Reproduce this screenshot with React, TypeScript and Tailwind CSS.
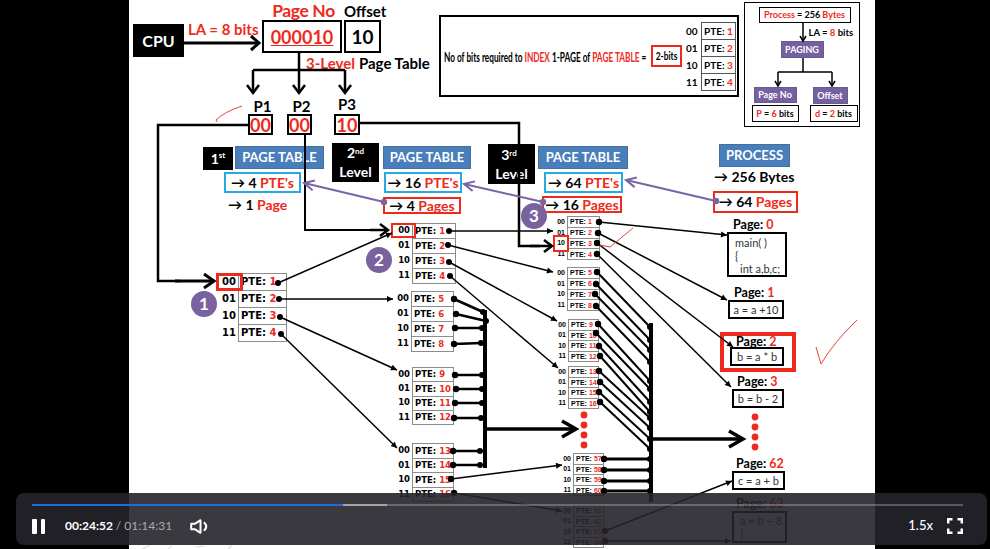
import type { ReactNode } from 'react';

// the slide is a free canvas: groups are placed in page pixels, their insides flow
function Place({ x, y, className = '', children }: { x: number; y: number; className?: string; children: ReactNode }) {
  return (
    <div className={`absolute whitespace-nowrap leading-none ${className}`} style={{ left: x, top: y }}>
      {children}
    </div>
  );
}

const R = ({ children }: { children: ReactNode }) => <span className="text-[#ee2a1c]">{children}</span>;

const BITS = ['00', '01', '10', '11'];

function PteTable({ x, y, label, cell, row, start, font }: { x: number; y: number; label: number; cell: number; row: number; start: number; font: string }) {
  return (
    <div className={`absolute font-bold leading-none text-black ${font}`} style={{ left: x, top: y }}>
      {BITS.map((b, i) => (
        <div key={b} className="flex items-stretch" style={{ height: row }}>
          <div className="flex items-center justify-end pr-[2px]" style={{ width: label }}>{b}</div>
          <div className="-mb-px flex items-center whitespace-nowrap border border-[#8c8c8c] bg-white pl-[2px]" style={{ width: cell }}>
            PTE:&nbsp;<R>{start + i}</R>
          </div>
        </div>
      ))}
    </div>
  );
}

type P = [number, number];

function Arrow({ a, b, w = 2, h = 6, hw = 4, color = '#000', open = false, dot = false }: { a: P; b: P; w?: number; h?: number; hw?: number; color?: string; open?: boolean; dot?: boolean }) {
  const len = Math.hypot(b[0] - a[0], b[1] - a[1]);
  const ux = (b[0] - a[0]) / len;
  const uy = (b[1] - a[1]) / len;
  const l: P = [b[0] - h * ux - hw * uy, b[1] - h * uy + hw * ux];
  const r: P = [b[0] - h * ux + hw * uy, b[1] - h * uy - hw * ux];
  return (
    <g>
      <line x1={a[0]} y1={a[1]} x2={b[0]} y2={b[1]} stroke={color} strokeWidth={w} />
      {open ? (
        <polyline points={`${l[0]},${l[1]} ${b[0]},${b[1]} ${r[0]},${r[1]}`} fill="none" stroke={color} strokeWidth={w} />
      ) : (
        <polygon points={`${l[0]},${l[1]} ${b[0]},${b[1]} ${r[0]},${r[1]}`} fill={color} />
      )}
      {dot && <circle cx={a[0]} cy={a[1]} r={3.2} fill={color} />}
    </g>
  );
}

function Link({ a, b, w = 2 }: { a: P; b: P; w?: number }) {
  return (
    <g>
      <line x1={a[0]} y1={a[1]} x2={b[0]} y2={b[1]} stroke="#000" strokeWidth={w} />
      <circle cx={a[0]} cy={a[1]} r={3.2} fill="#000" />
      <circle cx={b[0]} cy={b[1]} r={3} fill="#000" />
    </g>
  );
}

const Dot = ({ p, r = 3 }: { p: P; r?: number }) => <circle cx={p[0]} cy={p[1]} r={r} fill="#000" />;

const BAR_Y = [327, 340, 350, 362, 381, 389, 402, 412, 418, 428, 439, 449];
const L3_DOTS: P[] = [
  [597, 272], [596, 284], [595, 294], [596, 306],
  [598, 324], [596, 333], [599, 346], [600, 356],
  [599, 371], [600, 382], [599, 392], [600, 402],
];

const L2_LINKS: [P, P][] = [
  [[454, 299], [483, 312]],
  [[456, 314], [486, 321]],
  [[455, 328], [482, 328]],
  [[454, 344], [481, 343]],
  [[455, 375], [482, 375]],
  [[456, 389], [482, 389]],
  [[455, 403], [482, 403]],
  [[454, 418], [481, 418]],
  [[453, 451], [480, 451]],
  [[453, 465], [480, 465]],
];

function Diagram() {
  return (
    <svg className="absolute left-0 top-0" width={990} height={549} viewBox="0 0 990 549" fill="none">
      {/* CPU + address split */}
      <Arrow a={[184, 43]} b={[259, 43]} w={3} h={8} hw={7} open />
      <line x1={299} y1={53} x2={299} y2={70} stroke="#000" strokeWidth={2.5} />
      <line x1={253} y1={70} x2={345} y2={70} stroke="#000" strokeWidth={2.5} />
      <Arrow a={[253, 70]} b={[253, 93]} w={2.5} h={8} hw={6} open />
      <Arrow a={[299, 70]} b={[299, 93]} w={2.5} h={8} hw={6} open />
      <Arrow a={[345, 70]} b={[345, 93]} w={2.5} h={8} hw={6} open />

      {/* level routes */}
      <polyline points="248,125 158,125 158,281 180,281" stroke="#000" strokeWidth={2.5} />
      <Arrow a={[175, 281]} b={[214, 281]} w={3} h={10} hw={7} open />
      <polyline points="305,133 305,230 380,230" stroke="#000" strokeWidth={2} />
      <Arrow a={[370, 230]} b={[388, 230]} w={2.5} h={8} hw={6} open />
      <polyline points="360,123 519,123 519,246 540,246" stroke="#000" strokeWidth={2.5} />
      <Arrow a={[530, 246]} b={[552, 246]} w={2.5} h={8} hw={6} open />

      {/* purple links */}
      <Arrow a={[716, 201]} b={[626, 180]} w={2} h={10} hw={5} color="#7b64a4" open dot />
      <Arrow a={[543, 202]} b={[464, 184]} w={2} h={10} hw={5} color="#7b64a4" open dot />
      <Arrow a={[384, 202]} b={[304, 183]} w={2} h={10} hw={5} color="#7b64a4" open dot />

      {/* level 1 to level 2 */}
      <Arrow a={[278, 283]} b={[392, 233]} w={1.5} h={6} hw={3} />
      <Arrow a={[279, 299]} b={[393, 299]} w={1.5} h={6} hw={3} />
      <Arrow a={[280, 317]} b={[397, 370]} w={1.5} h={6} hw={3} />
      <Arrow a={[281, 334]} b={[397, 448]} w={1.5} h={6} hw={3} />
      <Dot p={[278, 283]} />
      <Dot p={[279, 299]} />
      <Dot p={[280, 317]} />
      <Dot p={[281, 334]} />

      {/* level 2 to level 3 */}
      <Arrow a={[449, 231]} b={[553, 231]} w={1.5} h={6} hw={3} />
      <Arrow a={[448, 245]} b={[553, 272]} w={1.5} h={6} hw={3} />
      <Arrow a={[449, 262]} b={[557, 321]} w={1.5} h={6} hw={3} />
      <Arrow a={[450, 276]} b={[558, 368]} w={1.5} h={6} hw={3} />
      <Dot p={[449, 231]} />
      <Dot p={[448, 245]} />
      <Dot p={[449, 262]} />
      <Dot p={[450, 276]} />

      {L2_LINKS.map(([a, b], i) => (
        <Link key={i} a={a} b={b} w={2.5} />
      ))}
      <line x1={485} y1={310} x2={485} y2={468} stroke="#000" strokeWidth={4} />
      <Arrow a={[485, 429]} b={[576, 429]} w={3.5} h={14} hw={8} open />
      <Arrow a={[451, 479]} b={[562, 465]} w={1.5} h={6} hw={3} dot />
      <Arrow a={[454, 493]} b={[562, 511]} w={1.5} h={6} hw={3} dot />

      {/* level 3 to pages */}
      <Arrow a={[599, 222]} b={[727, 235]} w={1.5} h={6} hw={3} dot />
      <Arrow a={[598, 233]} b={[727, 300]} w={1.5} h={6} hw={3} dot />
      <Arrow a={[597, 243]} b={[733, 347]} w={1.5} h={6} hw={3} dot />
      <Arrow a={[597, 254]} b={[731, 387]} w={1.5} h={6} hw={3} dot />

      {L3_DOTS.map((p, i) => (
        <Link key={i} a={p} b={[650, BAR_Y[i]]} />
      ))}
      {[459, 470, 481, 491].map((y) => (
        <Link key={y} a={[604, y]} b={[650, y]} w={3} />
      ))}
      <line x1={651} y1={323} x2={651} y2={502} stroke="#000" strokeWidth={4} />
      <Arrow a={[651, 439]} b={[743, 439]} w={3.5} h={14} hw={8} open />
      <Arrow a={[605, 531]} b={[732, 481]} w={1.5} h={6} hw={3} dot />
      <Arrow a={[605, 541]} b={[731, 541]} w={1.5} h={6} hw={3} dot />

      {/* red dots between tables and pages */}
      {[415, 425, 435, 445].map((y) => (
        <circle key={y} cx={584} cy={y} r={3.4} fill="#ee2a1c" />
      ))}
      {[417, 427, 437, 447].map((y) => (
        <circle key={y} cx={755} cy={y} r={3.4} fill="#ee2a1c" />
      ))}

      {/* pen ticks */}
      <path d="M242 106 Q224 112 216 120 L217 122" stroke="#e2453a" strokeWidth={1} />
      <path d="M600 245 L610 247 L633 228" stroke="#e2453a" strokeWidth={1} />
      <path d="M816 347 L821 364 Q834 342 857 320" stroke="#e2453a" strokeWidth={1} />

      {/* small paging tree */}
      <Arrow a={[803, 23]} b={[803, 41]} w={1.5} h={5} hw={3} open />
      <polyline points="803,58 803,72" stroke="#000" strokeWidth={1.5} />
      <polyline points="778,72 832,72" stroke="#000" strokeWidth={1.5} />
      <Arrow a={[778, 72]} b={[778, 86]} w={1.5} h={5} hw={3} open />
      <Arrow a={[832, 72]} b={[832, 86]} w={1.5} h={5} hw={3} open />

      {/* smudges left at the slide's bottom edge */}
      <path d="M142 549 L150 545 M168 549 L172 546 M196 547 L204 546 M228 549 L232 545" stroke="#e4e4e4" strokeWidth={1.5} />
    </svg>
  );
}

const BLUE = 'flex h-[23px] items-center justify-center border border-[#41719c] bg-[#4a7ebb] text-[13px] font-bold text-white';
const BLACK = 'flex items-center justify-center bg-black text-[14px] font-bold text-white';
const PURPLE = 'flex items-center justify-center border border-[#6a5a94] bg-[#7560a0] text-[9px] font-bold text-white';
const CYAN = 'flex h-[21px] items-center justify-center border-[2.5px] border-[#27a9e1] text-[14px] font-bold text-black';
const RED_BOX = 'flex items-center justify-center border-[2.5px] border-[#ee2a1c] text-[14px] font-bold text-black';
const RED_NUM = 'flex h-[21px] items-center justify-center border-2 border-black text-[18px] font-bold text-[#ee2a1c]';
const CODE = 'border-2 border-black bg-white text-[11px] text-[#333]';
const CODE_ROW = 'flex items-center justify-center';
const STEP = 'absolute flex h-[26px] w-[26px] items-center justify-center rounded-full bg-[#7a629f] text-[17px] font-bold text-white';

function PageCard({ x, y, ml, w, h, n, children }: { x: number; y: number; ml: number; w: number; h: number; n: number; children: ReactNode }) {
  return (
    <Place x={x} y={y} className="flex flex-col">
      <div className="h-[13px] text-[12.5px] font-bold text-black" style={{ marginLeft: ml }}>
        Page: <R>{n}</R>
      </div>
      <div className={CODE} style={{ width: w, height: h }}>{children}</div>
    </Place>
  );
}

function Slide() {
  return (
    <div className="absolute inset-0 font-['Lato'] text-black">
      {/* address bar */}
      <div className={`absolute left-[133px] top-[24px] h-[33px] w-[51px] !text-[16px] ${BLACK}`}>CPU</div>
      <Place x={188} y={22} className="text-[15px] font-bold text-[#ee2a1c]">LA = 8 bits</Place>
      <Place x={262} y={2} className="flex gap-[2px]">
        <div className="flex w-[80px] flex-col items-center">
          <div className="h-[18px] pl-[3px] text-[17.5px] font-bold tracking-[-0.4px] text-[#ee2a1c]">Page No</div>
          <div className="flex h-[33px] w-full items-center justify-center border-2 border-black text-[18px] font-bold text-[#ee2a1c] underline">000010</div>
        </div>
        <div className="flex w-[37px] flex-col">
          <div className="h-[18px] pt-[2px] text-[15px] font-bold">Offset</div>
          <div className="flex h-[33px] items-center justify-center border-2 border-black text-[19px] font-bold">10</div>
        </div>
      </Place>
      <Place x={306} y={56} className="flex gap-[4px] text-[15px] font-bold">
        <R>3-Level</R>
        <span>Page Table</span>
      </Place>

      <Place x={248} y={97} className="flex items-end text-[15px] font-bold">
        <div className="flex w-[25px] flex-col items-center">
          <span className="h-[15px] pl-[4px]">P1</span>
          <div className={`w-full ${RED_NUM}`}>00</div>
        </div>
        <div className="ml-[14px] flex w-[25px] flex-col items-center">
          <span className="h-[15px] pl-[4px]">P2</span>
          <div className={`w-full ${RED_NUM}`}>00</div>
        </div>
        <div className="ml-[22px] flex w-[26px] flex-col items-center">
          <span className="h-[17px]">P3</span>
          <div className={`w-full ${RED_NUM}`}>10</div>
        </div>
      </Place>

      {/* page table headers */}
      <div className={`absolute left-[203px] top-[147px] h-[23px] w-[30px] ${BLACK}`}>1<sup className="text-[8px]">st</sup></div>
      <Place x={224} y={146} className="flex flex-col items-start">
        <div className={`ml-[11px] w-[89px] ${BLUE}`}>PAGE TABLE</div>
        <div className={`mt-[3px] w-[77px] ${CYAN}`}>→&nbsp;4&nbsp;<R>PTE's</R></div>
        <div className="ml-[4px] mt-[5px] text-[14px] font-bold">→&nbsp;1&nbsp;<R>Page</R></div>
      </Place>

      <div className={`absolute left-[332px] top-[143px] h-[39px] w-[47px] flex-col gap-[5px] leading-none ${BLACK}`}>
        <span>2<sup className="text-[8px]">nd</sup></span>
        <span>Level</span>
      </div>
      <Place x={383} y={146} className="flex flex-col items-start">
        <div className={`w-[88px] ${BLUE}`}>PAGE TABLE</div>
        <div className={`ml-[1px] mt-[3px] w-[78px] ${CYAN}`}>→&nbsp;16&nbsp;<R>PTE's</R></div>
        <div className={`mt-[4px] h-[17px] w-[78px] ${RED_BOX}`}>→&nbsp;4&nbsp;<R>Pages</R></div>
      </Place>

      <div className={`absolute left-[488px] top-[144px] h-[40px] w-[47px] flex-col gap-[5px] leading-none ${BLACK}`}>
        <span className="pr-[5px]">3<sup className="text-[8px]">rd</sup></span>
        <span>Level</span>
      </div>
      <Place x={538} y={146} className="flex flex-col items-start">
        <div className={`w-[90px] ${BLUE}`}>PAGE TABLE</div>
        <div className={`ml-[6px] mt-[3px] w-[79px] ${CYAN}`}>→&nbsp;64&nbsp;<R>PTE's</R></div>
        <div className={`ml-[4px] mt-[3px] h-[17px] w-[80px] ${RED_BOX}`}>→&nbsp;16&nbsp;<R>Pages</R></div>
      </Place>

      <Place x={713} y={144} className="flex flex-col items-start">
        <div className={`ml-[6px] w-[71px] ${BLUE}`}>PROCESS</div>
        <div className="ml-[1px] mt-[3px] h-[14px] text-[14px] font-bold">→&nbsp;256 Bytes</div>
        <div className={`mt-[7px] h-[22px] w-[85px] ${RED_BOX}`}>→&nbsp;64&nbsp;<R>Pages</R></div>
      </Place>

      {/* index bits note */}
      <div className="absolute left-[439px] top-[15px] flex h-[82px] w-[300px] items-center border-2 border-black pl-[3px]">
        <div className="w-[204px] shrink-0">
          <span className="inline-block origin-left scale-x-[0.66] whitespace-nowrap text-[12.5px] font-bold">
            No of bits required to <R>INDEX</R> 1-PAGE of <R>PAGE TABLE</R> =
          </span>
        </div>
        <div className="ml-[3px] flex h-[22px] w-[31px] shrink-0 items-center justify-center overflow-hidden border-[2.5px] border-[#ee2a1c]">
          <span className="inline-block scale-x-[0.7] whitespace-nowrap text-[12px] font-bold">2-bits</span>
        </div>
        <div className="ml-[4px] text-[10px] font-bold leading-none">
          {BITS.map((b, i) => (
            <div key={b} className="flex h-[17px] items-stretch">
              <div className="flex w-[15px] items-center">{b}</div>
              <div className="-mb-px flex w-[35px] items-center border border-[#555] pl-[2px]">PTE:&nbsp;<R>{i + 1}</R></div>
            </div>
          ))}
        </div>
      </div>

      {/* paging summary */}
      <div className="absolute left-[744px] top-[2px] flex h-[125px] w-[116px] flex-col items-start border-[1.5px] border-black text-[9px] font-bold leading-none">
        <div className="ml-[13.5px] mt-[3.5px] flex h-[16px] w-[92px] items-center justify-center border border-black"><R>Process</R>&nbsp;=&nbsp;256&nbsp;<R>Bytes</R></div>
        <div className="ml-[63.5px] h-[18px] pt-[5px] text-[9.5px]">LA = <R>8</R> bits</div>
        <div className={`ml-[35.5px] h-[17px] w-[43px] ${PURPLE}`}>PAGING</div>
        <div className="ml-[8.5px] mt-[29px] flex">
          <div className={`h-[16px] w-[43px] ${PURPLE}`}>Page No</div>
          <div className={`ml-[16px] h-[17px] w-[35px] ${PURPLE}`}>Offset</div>
        </div>
        <div className="ml-[6.5px] mt-[1px] flex">
          <div className="flex h-[17px] w-[47px] items-center justify-center border border-black"><R>P</R>&nbsp;=&nbsp;<R>6</R>&nbsp;bits</div>
          <div className="ml-[11px] flex h-[17px] w-[48px] items-center justify-center border border-black"><R>d</R>&nbsp;=&nbsp;<R>2</R>&nbsp;bits</div>
        </div>
      </div>

      {/* level 1 */}
      <PteTable x={218} y={273} label={20} cell={49} row={17} start={1} font="font-['DejaVu_Sans'] text-[10px]" />
      <div className="absolute left-[216px] top-[273px] h-[18px] w-[27px] border-[3px] border-[#ee2a1c]" />

      {/* level 2 */}
      <PteTable x={392} y={223} label={20} cell={44} row={15} start={1} font="font-['DejaVu_Sans'] text-[8.5px]" />
      <div className="absolute left-[391px] top-[223px] h-[15px] w-[25px] border-[2.5px] border-[#ee2a1c]" />
      <PteTable x={391} y={291} label={20} cell={43} row={15} start={5} font="font-['DejaVu_Sans'] text-[8.5px]" />
      <PteTable x={392} y={367} label={20} cell={42} row={14.3} start={9} font="font-['DejaVu_Sans'] text-[8.5px]" />
      <PteTable x={392} y={443} label={20} cell={42} row={14.5} start={13} font="font-['DejaVu_Sans'] text-[8.5px]" />

      {/* level 3 */}
      <PteTable x={553} y={216} label={14} cell={33} row={10.8} start={1} font="font-['Liberation_Sans'] text-[7px]" />
      <div className="absolute left-[553px] top-[235px] h-[17px] w-[16px] border-[2.5px] border-[#ee2a1c]" />
      <PteTable x={553} y={267} label={14} cell={33} row={10.8} start={5} font="font-['Liberation_Sans'] text-[7px]" />
      <PteTable x={554} y={319} label={14} cell={31} row={10.5} start={9} font="font-['Liberation_Sans'] text-[7px]" />
      <PteTable x={554} y={366} label={14} cell={31} row={10.5} start={13} font="font-['Liberation_Sans'] text-[7px]" />
      <PteTable x={559} y={453} label={14} cell={31} row={10.5} start={57} font="font-['Liberation_Sans'] text-[7px]" />
      <PteTable x={559} y={505} label={14} cell={31} row={10.5} start={61} font="font-['Liberation_Sans'] text-[7px]" />

      {/* pages */}
      <PageCard x={727} y={219} ml={6} w={60} h={45} n={0}>
        <div className="pl-[6px] pt-[2px] leading-[13px]">main( )<br />{'{'}<br /><span className="pl-[5px]">int a,b,c;</span></div>
      </PageCard>
      <PageCard x={728} y={287} ml={6} w={56} h={19} n={1}>
        <div className={`h-full ${CODE_ROW}`}>a = a +10</div>
      </PageCard>
      <div className="absolute left-[720px] top-[332px] flex h-[40px] w-[76px] flex-col border-4 border-[#ee2a1c] leading-none">
        <div className="ml-[12px] h-[11px] text-[12.5px] font-bold">Page: <R>2</R></div>
        <div className={`ml-[6px] h-[19px] w-[54px] ${CODE} ${CODE_ROW}`}>b = a * b</div>
      </div>
      <PageCard x={732} y={376} ml={5} w={52} h={19} n={3}>
        <div className={`h-full ${CODE_ROW}`}>b = b - 2</div>
      </PageCard>
      <PageCard x={732} y={458} ml={4} w={53} h={19} n={62}>
        <div className={`h-full ${CODE_ROW}`}>c = a + b</div>
      </PageCard>
      <PageCard x={732} y={498} ml={4} w={55} h={32} n={63}>
        <div className="pl-[6px] pt-[1px] leading-[13px]">a = b − 8<br />{'}'}</div>
      </PageCard>

      {/* step markers */}
      <div className={`${STEP} left-[191px] top-[291px]`}>1</div>
      <div className={`${STEP} left-[366px] top-[247px]`}>2</div>
      <div className={`${STEP} left-[521px] top-[203px]`}>3</div>

      <Diagram />
    </div>
  );
}

function Controls() {
  return (
    <div className="absolute bottom-[4px] left-[16px] right-[3px] h-[52px] rounded-lg bg-[#23242a]/90 pl-4 pr-6 pt-[11px] font-['Lato'] text-white">
      <div className="relative h-[2px] bg-white/25">
        <div className="absolute left-0 top-0 h-full w-[355px] bg-white/40" />
        <div className="absolute left-0 top-0 h-full w-[311px] bg-[#1c6fd8]" />
      </div>
      <div className="mt-[6px] flex h-[28px] items-center">
        <div className="flex h-[15px] gap-[4px]">
          <div className="w-[4.5px] rounded-[1px] bg-white" />
          <div className="w-[4.5px] rounded-[1px] bg-white" />
        </div>
        <div className="ml-[20px] text-[12px] font-bold">
          00:24:52 <span className="font-normal text-[#a9a9ad]">/ 01:14:31</span>
        </div>
        {/* speaker with one wave */}
        <svg className="ml-[18px]" width={21} height={15} viewBox="0 0 21 15" fill="none" stroke="#fff">
          <path d="M1.2 4.8H4.8L10.5 1.2V13.8L4.8 10.2H1.2Z" strokeWidth={2} strokeLinejoin="round" />
          <path d="M14.5 4C16.8 6 16.8 9 14.5 11" strokeWidth={2.2} strokeLinecap="round" />
        </svg>
        <div className="ml-auto text-[13px] font-medium">1.5x</div>
        <svg className="ml-[14px]" width={16} height={16} viewBox="0 0 16 16" fill="none" stroke="#fff" strokeWidth={2.5}>
          <path d="M1.2 5.5V1.2H5.5M10.5 1.2H14.8V5.5M14.8 10.5V14.8H10.5M5.5 14.8H1.2V10.5" />
        </svg>
      </div>
    </div>
  );
}

export default function App() {
  return (
    <div className="relative h-[549px] w-[990px] overflow-hidden bg-black">
      <div className="ml-[129px] h-full w-[746px] bg-white" />
      <Slide />
      <Controls />
    </div>
  );
}
